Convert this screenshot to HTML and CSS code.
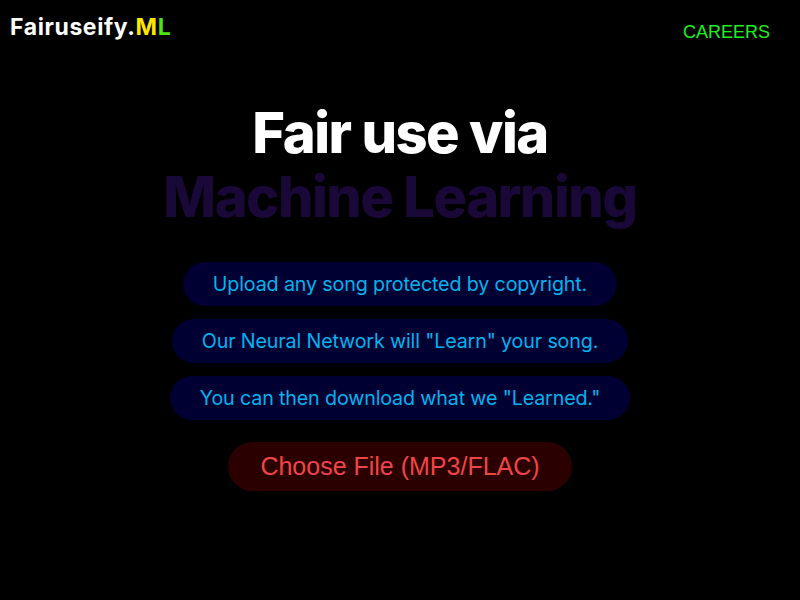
FILE: index.html
```html
<!DOCTYPE html>
<html>
<head>
<meta charset="utf-8">
<link rel="stylesheet" href="styles.css">
</head>
<body>
<header class="top">
  <div class="logo">Fairuseify.<span class="m">M</span><span class="l">L</span></div>
  <a class="careers" href="#">CAREERS</a>
</header>
<main class="hero">
  <h1 class="title">Fair use via</h1>
  <h2 class="subtitle">Machine Learning</h2>
  <div class="steps">
    <p class="pill">Upload any song protected by copyright.</p>
    <p class="pill">Our Neural Network will "Learn" your song.</p>
    <p class="pill">You can then download what we "Learned."</p>
  </div>
  <button class="choose">Choose File (MP3/FLAC)</button>
</main>
</body>
</html>
```
FILE: styles.css
```css
html, body {
  margin: 0;
  padding: 0;
  background: #000;
  height: 100%;
}
body {
  font-family: Inter, "Noto Sans", sans-serif;
  color: #fff;
}
.top {
  display: flex;
  justify-content: space-between;
  align-items: flex-start;
  padding: 12px 30px 0 10px;
}
.logo {
  font-weight: 700;
  font-size: 23px;
  letter-spacing: 0.6px;
  line-height: 30px;
}
.logo .m { color: #ffe600; }
.logo .l { color: #4ee40e; }
.careers {
  font-family: "Liberation Sans", Arial, sans-serif;
  color: #1ff01f;
  text-decoration: none;
  font-size: 18px;
  line-height: 22px;
  margin-top: 9px;
}
.hero {
  display: flex;
  flex-direction: column;
  align-items: center;
  padding-top: 58px;
}
.title, .subtitle {
  margin: 0;
  font-weight: 800;
  font-size: 56px;
  line-height: 64px;
  letter-spacing: -1.5px;
}
.title { color: #fff; }
.subtitle { color: #1a0838; margin-top: 0; }
.steps {
  display: flex;
  flex-direction: column;
  align-items: center;
  gap: 13px;
  margin-top: 33px;
}
.pill {
  margin: 0;
  background: #000033;
  color: #00b4ee;
  font-size: 19.7px;
  line-height: 44px;
  padding: 0 30px;
  border-radius: 22px;
  letter-spacing: -0.15px;
}
.choose {
  margin-top: 22px;
  background: #2a0000;
  color: #f04545;
  border: none;
  font-family: "Liberation Sans", Arial, sans-serif;
  font-size: 25px;
  height: 49px;
  padding: 0 32px;
  border-radius: 25px;
}
```
